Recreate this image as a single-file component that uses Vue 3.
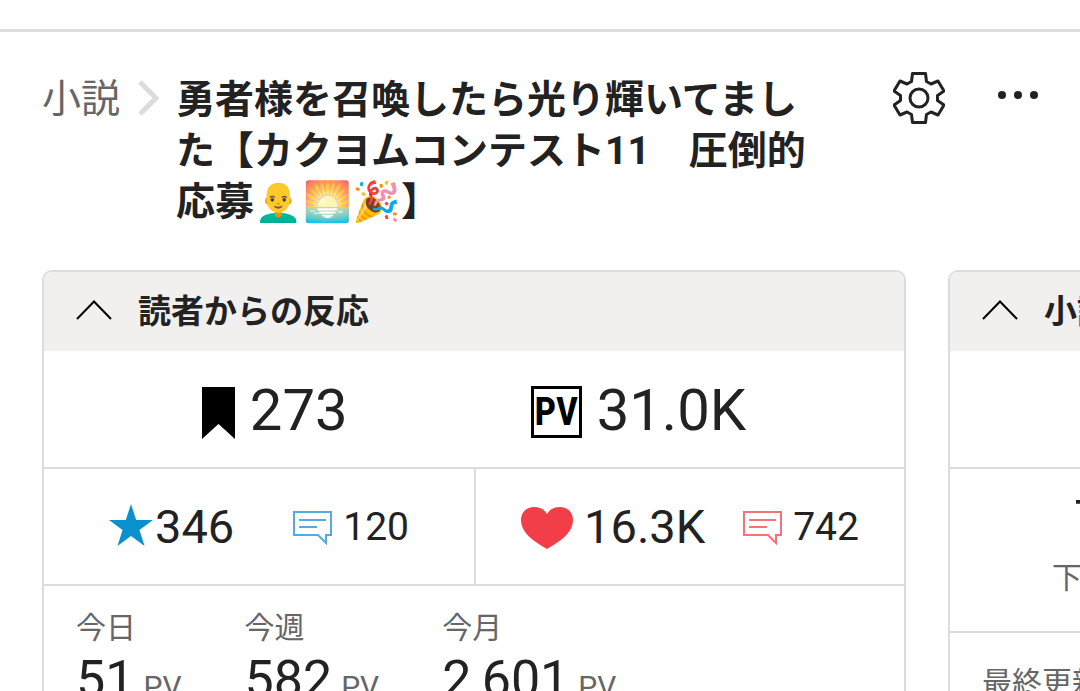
<script setup>
import { ref } from 'vue'

const readerOpen = ref(true)
const infoOpen = ref(true)

const periods = [
  { label: '今日', value: '51' },
  { label: '今週', value: '582' },
  { label: '今月', value: '2,601' },
]
</script>

<template>
  <div class="page">
    <header class="head">
      <a class="crumb" href="#novels">小説</a>
      <svg class="sep" width="22" height="36" viewBox="0 0 22 36" aria-hidden="true">
        <path d="M2 2 18 18 2 34" fill="none" stroke="#dcdcdc" stroke-width="5" />
      </svg>
      <h1 class="title">勇者様を召喚したら光り輝いてました【カクヨムコンテスト11　圧倒的応募👨‍🦲🌅🎉】</h1>
      <button class="icon-btn" type="button" aria-label="設定">
        <svg width="52" height="52" viewBox="0 0 52 52" fill="none" stroke="#222" stroke-width="3" stroke-linejoin="round">
          <path d="M19.500 1.500H32.500L33.500 9.500 38 12 45 9 51 19 44.500 23.500V28.500L51 33 45 43 38 40 33.500 42.500 32.500 50.500H19.500L18.500 42.500 14 40 7 43 1 33 7.500 28.500V23.500L1 19 7 9 14 12 18.500 9.500z" />
          <circle cx="26" cy="26" r="9" />
        </svg>
      </button>
      <button class="icon-btn more" type="button" aria-label="メニュー">
        <svg width="42" height="10" viewBox="0 0 42 10" fill="#222">
          <circle cx="6" cy="5" r="4" /><circle cx="22" cy="5" r="4" /><circle cx="38" cy="5" r="4" />
        </svg>
      </button>
    </header>

    <main class="cards">
      <section class="card">
        <h2 class="card-head">
          <button class="toggle" type="button" :aria-expanded="readerOpen" @click="readerOpen = !readerOpen">
            <svg width="36" height="20" viewBox="0 0 36 20" aria-hidden="true">
              <path d="M1 19 18 1.500 35 19" fill="none" stroke="#000" stroke-width="2" />
            </svg>
            読者からの反応
          </button>
        </h2>
        <div v-show="readerOpen">
          <div class="row totals">
            <div class="metric">
              <svg class="low" width="33" height="52" viewBox="0 0 33 52" aria-hidden="true">
                <path d="M0 0H33V52L16.500 37 0 52z" fill="#000" />
              </svg>
              <span class="num-xl">273</span>
            </div>
            <div class="metric">
              <span class="pv-mark">PV</span>
              <span class="num-xl">31.0K</span>
            </div>
          </div>
          <div class="row split">
            <div class="cell">
              <div class="metric tight">
                <svg class="star" width="44" height="42" viewBox="0 0 44 42" aria-hidden="true">
                  <path d="M22 0 27.200 16H44L30.400 26 35.600 42 22 32 8.400 42 13.600 26 0 16H16.800z" fill="#0b90ce" />
                </svg>
                <span class="num-lg">346</span>
              </div>
              <div class="metric small blue">
                <svg width="39" height="34" viewBox="0 0 39 34" fill="none" stroke="currentColor" stroke-width="2" aria-hidden="true">
                  <path d="M1 1H38V24H33V32L25 24H1zM6 9H33M6 16H24" />
                </svg>
                <span class="num-md">120</span>
              </div>
            </div>
            <div class="cell hearts">
              <div class="metric">
                <svg width="52" height="42" viewBox="0 0 52 42" aria-hidden="true">
                  <path d="M26 42C18 37 0 28 0 13 0 5 6 0 13 0 19 0 23 2 26 7 29 2 33 0 39 0 46 0 52 5 52 13 52 28 34 37 26 42z" fill="#f23e49" />
                </svg>
                <span class="num-lg">16.3K</span>
              </div>
              <div class="metric small red">
                <svg width="39" height="34" viewBox="0 0 39 34" fill="none" stroke="currentColor" stroke-width="2" aria-hidden="true">
                  <path d="M1 1H38V24H33V32L25 24H1zM6 9H33M6 16H24" />
                </svg>
                <span class="num-md">742</span>
              </div>
            </div>
          </div>
          <dl class="periods">
            <div v-for="p in periods" :key="p.label">
              <dt>{{ p.label }}</dt>
              <dd>{{ p.value }}<small>PV</small></dd>
            </div>
          </dl>
        </div>
      </section>

      <section class="card">
        <h2 class="card-head">
          <button class="toggle" type="button" :aria-expanded="infoOpen" @click="infoOpen = !infoOpen">
            <svg width="36" height="20" viewBox="0 0 36 20" aria-hidden="true">
              <path d="M1 19 18 1.500 35 19" fill="none" stroke="#000" stroke-width="2" />
            </svg>
            小説
          </button>
        </h2>
        <div v-show="infoOpen">
          <div class="row totals"></div>
          <div class="row counts">
            <div class="count"><strong>7</strong><span>下書き</span></div>
          </div>
          <p class="updated">最終更新</p>
        </div>
      </section>
    </main>
  </div>
</template>

<style>
body {
  background: #fff;
}
</style>

<style scoped>
.page {
  box-sizing: border-box;
  height: 100vh;
  padding-top: 29px;
  overflow: hidden;
  color: #222;
  font-family: Roboto, "Noto Sans CJK JP", sans-serif;
}
.head {
  display: flex;
  align-items: flex-start;
  padding: 40px 42px 0;
  border-top: 3px solid #dcdcdc;
}
.crumb {
  margin-top: 2px;
  color: #666;
  font-size: 39px;
  line-height: 51px;
  text-decoration: none;
}
.sep {
  flex: none;
  margin: 8px 16px 0 18px;
}
.title {
  flex: 1;
  margin: 3px 70px 0 0;
  font-size: 39px;
  font-weight: 700;
  line-height: 51px;
}
button {
  padding: 0;
  border: 0;
  background: none;
  color: inherit;
  font: inherit;
  cursor: pointer;
}
svg {
  display: block;
  flex: none;
}
.icon-btn {
  display: flex;
  align-items: center;
  height: 52px;
}
.more {
  height: 46px;
  margin-left: 51px;
}
.cards {
  display: flex;
  align-items: flex-start;
  gap: 42px;
  margin-top: 42px;
  padding-left: 42px;
}
.card {
  box-sizing: border-box;
  flex: none;
  width: 80vw;
  overflow: hidden;
  border: 2px solid #dcdcdc;
  border-radius: 10px;
}
.card-head {
  margin: 0;
  background: #f1f0ee;
  font-size: 33px;
  font-weight: 700;
  line-height: 79px;
}
.toggle {
  display: flex;
  align-items: center;
  gap: 26px;
  width: 100%;
  padding-left: 32px;
  text-align: left;
}
.toggle svg {
  margin-bottom: 4px;
}
.row {
  display: flex;
  border-bottom: 2px solid #dcdcdc;
}
.totals {
  align-items: center;
  justify-content: center;
  gap: 183px;
  height: 116px;
}
.metric {
  display: flex;
  align-items: center;
  gap: 11px;
}
.totals .metric {
  gap: 15px;
  padding-top: 2px;
}
.metric.tight {
  gap: 2px;
}
.metric.small {
  gap: 11px;
}
.low {
  margin-top: 6px;
}
.star {
  margin-bottom: 3px;
}
.hearts .metric > svg,
.blue > svg {
  margin-top: 2px;
}
.num-xl {
  font-size: 58px;
}
.num-lg {
  font-size: 47px;
}
.num-md {
  font-size: 39px;
}
.blue svg {
  color: #55acdc;
}
.red svg {
  color: #f47378;
}
.num-md,
.num-lg,
.num-xl {
  line-height: 68px;
}
.pv-mark {
  box-sizing: border-box;
  width: 51px;
  height: 52px;
  margin-top: 4px;
  border: 3px solid #000;
  color: #000;
  font-family: "Roboto Condensed", "Liberation Sans Narrow", "Liberation Sans", sans-serif;
  font-size: 38px;
  font-weight: 700;
  line-height: 46px;
  text-align: center;
}
.cell {
  box-sizing: border-box;
  display: flex;
  width: 50%;
  align-items: center;
  justify-content: center;
  gap: 59px;
  height: 115px;
}
.hearts {
  gap: 38px;
  border-left: 2px solid #dcdcdc;
}
.periods {
  display: flex;
  gap: 63px;
  margin: 0;
  padding: 24px 32px;
}
dt {
  color: #666;
  font-size: 30px;
  line-height: 36px;
}
dd {
  margin: 4px 0 0;
  font-size: 52px;
  line-height: 60px;
}
small {
  margin-left: 9px;
  color: #666;
  font-size: 30px;
}
.counts {
  height: 162px;
}
.count {
  display: flex;
  flex-direction: column;
  padding: 21px 0 0 102px;
}
.count strong {
  padding-left: 22px;
  font-size: 52px;
  font-weight: 400;
  line-height: 60px;
}
.count span,
.updated {
  color: #666;
  font-size: 30px;
  line-height: 56px;
}
.updated {
  margin: 0;
  padding: 22px 32px;
}
</style>
